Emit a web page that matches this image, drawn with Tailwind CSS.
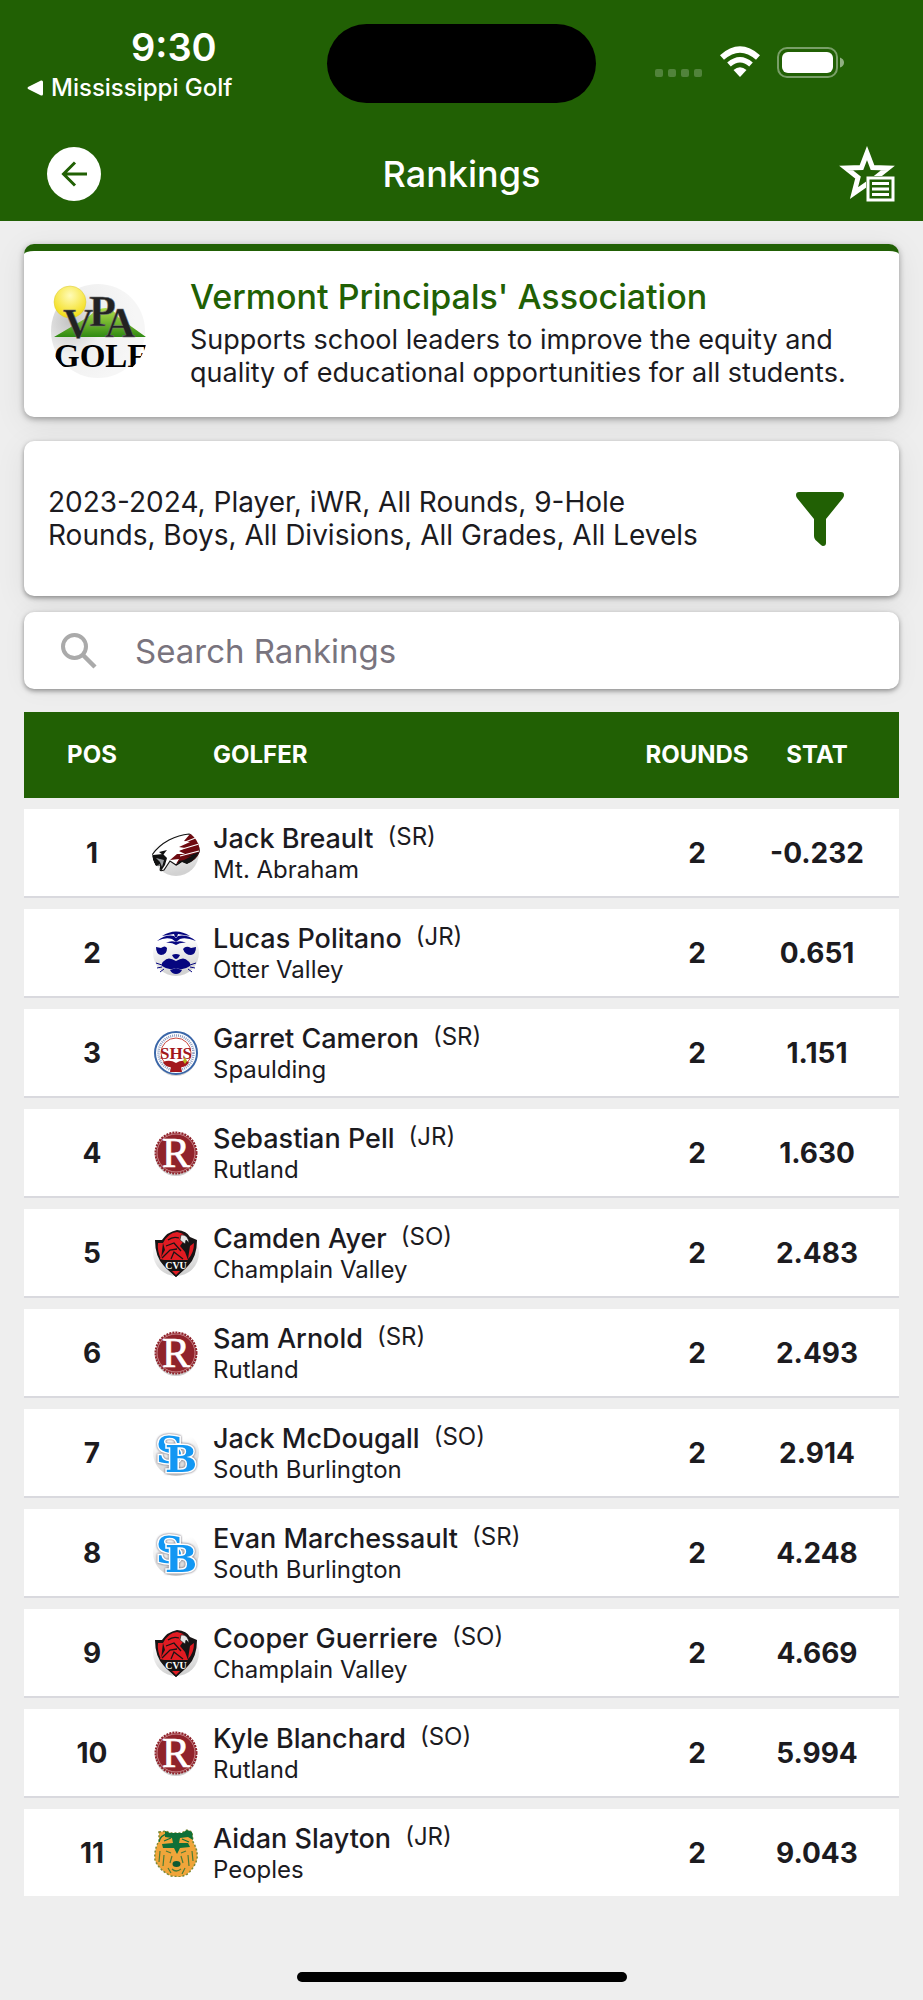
<!DOCTYPE html>
<html lang="en">
  <head>
    <meta charset="UTF-8" />
    <meta name="viewport" content="width=device-width, initial-scale=1.0" />
    <title>Rankings</title>
    <script src="https://cdn.jsdelivr.net/npm/@tailwindcss/browser@4"></script>
  </head>
  <body class="bg-[#eeeeee] font-['Inter',sans-serif] text-[#1c1b1f]">
    <!-- Shared gradients for the logos -->
    <svg class="absolute size-0" aria-hidden="true">
      <defs>
        <linearGradient id="disc" x1="0" y1="0" x2="0.2" y2="1">
          <stop offset="0.3" stop-color="#fff" />
          <stop offset="1" stop-color="#d2d2d2" />
        </linearGradient>
        <linearGradient id="hill" x1="0" y1="0" x2="0" y2="1">
          <stop offset="0" stop-color="#b4e04c" />
          <stop offset="1" stop-color="#2f8a12" />
        </linearGradient>
        <radialGradient id="sun" cx="0.5" cy="0.3" r="0.7">
          <stop offset="0" stop-color="#fffbb8" />
          <stop offset="1" stop-color="#f3dc10" />
        </radialGradient>
        <radialGradient id="shade" cx="0.2" cy="0.4" r="0.7">
          <stop offset="0" stop-color="#c4c4c4" />
          <stop offset="0.5" stop-color="#f0f0f0" />
          <stop offset="1" stop-color="#f6f6f6" />
        </radialGradient>
        <clipPath id="round"><circle cx="24" cy="24" r="24" /></clipPath>
        <clipPath id="roundLarge"><circle cx="50" cy="48" r="50" /></clipPath>
      </defs>
    </svg>

    <!-- School logos, copied into the ranking rows -->
    <template id="mt-abraham">
      <svg class="size-12" viewBox="0 0 48 48" aria-hidden="true">
        <circle cx="24" cy="24" r="23" fill="url(#disc)" />
        <g clip-path="url(#round)">
          <path d="M0 26 Q6 17 17 11 Q27 6 37 5 L44 6 Q49 16 47 23 Q44 31 35 34 L30 32 L24 36 L18 32 L12 41 L8 42 L9 36 L4 36 L2 31 Z" fill="#fff" stroke="#141414" stroke-width="1.2" />
          <path d="M38 5 L44 6 Q49 15 47 24 Q43 32 34 34 L30 32 L24 35 L27 30 L18 31 L25 25 L33 25 L27 22 L33 19 L27 18 L38 13 L32 12 Z" fill="#6d0a10" />
          <path d="M46 8 L28 15 M47 15 L27 21 M47 22 L28 27" stroke="#fff" stroke-width="1.2" />
          <path d="M47 23 Q43 31 35 35 L30 33 L24 37 L27 32 L32 31 L40 27 L34 28 Z M1 26 L11 25 L15 29 L13 36 L9 42 L8 35 L4 37 L1 31 Z" fill="#111" />
          <path d="M4 29 L12 31 L10 38 L8 33 Z" fill="#9a9da1" />
          <path d="M7 23 L15 21 L11 26 Z" fill="#111" />
        </g>
      </svg>
    </template>

    <template id="otter-valley">
      <svg class="size-12" viewBox="0 0 48 48" aria-hidden="true">
        <circle cx="24" cy="24" r="23" fill="url(#disc)" />
        <g fill="#06067f">
          <path d="M10 7 Q24 -2 38 7 L26 5 L25 8 H23 L22 5 Z" />
          <path d="M5 12 Q14 5 22 7 L24 9 L26 7 Q35 5 44 12 Q34 8 28 10 L24 13 L20 10 Q13 8 5 12 Z" />
          <path d="M14 14 Q19 11 24 13 Q29 11 34 14 Q29 13 24 16 Q19 13 14 14 Z" />
          <path d="M4 18 L9 19 Q13 16 15 19 Q15 26 9 26 Q4 25 4 18 Z M44 18 L39 19 Q34 16 31 20 Q33 26 39 26 Q44 25 44 18 Z" />
          <path d="M20 26 Q24 24 28 26 Q26 30 24 30 Q22 30 20 26 Z" />
          <path d="M24 32 Q32 27 36 32 Q39 34 38 37 Q31 42 24 39 Q17 42 10 37 Q9 34 12 32 Q16 27 24 32 Z" />
          <path d="M18 41 L24 39 L30 41 Q28 45 24 45 Q20 45 18 41 Z" />
        </g>
        <path d="M10 36 L4 34 M10 38 L5 39 M12 40 L8 43 M38 36 L44 34 M38 38 L43 39 M36 40 L40 43" stroke="#06067f" />
      </svg>
    </template>

    <template id="spaulding">
      <svg class="size-12" viewBox="0 0 48 48" aria-hidden="true">
        <circle cx="24" cy="26" r="21" fill="#d4d4d4" />
        <circle cx="24" cy="24" r="21" fill="#fff" stroke="#3a66a8" stroke-width="2" />
        <circle cx="24" cy="24" r="15" fill="#fff" stroke="#c8453c" />
        <circle cx="24" cy="24" r="17.500" fill="none" stroke="#8d9cc0" stroke-width="2.500" stroke-dasharray="1 1" />
        <text x="24" y="30" text-anchor="middle" font-family="Liberation Serif" font-size="17" font-weight="700" fill="#a3171c">SHS</text>
        <path d="M11 33 Q18 30 24 34 Q30 30 37 33 Q35 38 29 38 L30 43 L18 43 L19 38 Q13 38 11 33 Z" fill="#a3171c" />
        <path d="M31 32 l2 -4 l2 4 l-2 3 z" fill="#b8b81e" />
      </svg>
    </template>

    <template id="rutland">
      <svg class="size-12" viewBox="0 0 48 48" aria-hidden="true">
        <circle cx="24" cy="26" r="21" fill="#cfcfcf" />
        <circle cx="24" cy="24" r="20" fill="#90232b" />
        <circle cx="24" cy="24" r="20" fill="none" stroke="#90232b" stroke-width="3" stroke-dasharray="2 1" />
        <circle cx="24" cy="24" r="19" fill="none" stroke="#dfaeb1" stroke-width="0.7" />
        <text x="24" y="38" text-anchor="middle" font-family="Liberation Serif" font-size="42" font-weight="400" fill="#fff" stroke="#fff" stroke-width="0.7">R</text>
      </svg>
    </template>

    <template id="champlain-valley">
      <svg class="size-12" viewBox="0 0 48 48" aria-hidden="true">
        <circle cx="24" cy="24" r="23" fill="url(#disc)" />
        <path d="M3 11 L10 11 Q15 3 25 1 Q35 2 38 8 L45 11 Q45 28 36 37 L24 48 L12 37 Q3 28 3 11 Z" fill="#171415" />
        <path d="M6 14 L11 14 L9 30 Q5 22 6 14 Z M42 14 L38 17 L36 30 Q42 24 42 14 Z" fill="#e11b22" />
        <path d="M11 14 Q16 4 25 3 Q31 4 33 7 L29 10 L31 13 L28 17 L33 23 L36 31 L12 31 L8 30 L13 21 Z" fill="#e11b22" />
        <path d="M16 11 Q21 7 27 9 M14 17 L22 14 L29 22 M10 29 L18 21 L25 20 M19 30 L22 23 L31 30" fill="none" stroke="#171415" stroke-width="1.3" />
        <path d="M29 6 Q36 5 37 14 L34 11 L33 15 L28 11 Z" fill="#e4e4e4" stroke="#171415" stroke-width="0.6" />
        <path d="M9 31 H39 L34 39 L24 48 L14 39 Z" fill="#171415" />
        <text x="24" y="40" text-anchor="middle" font-family="Liberation Serif" font-size="10" font-weight="700" fill="#fff">CVU</text>
        <path d="M20 42 H28 L24 46 Z" fill="#e11b22" />
      </svg>
    </template>

    <template id="south-burlington">
      <svg class="size-12" viewBox="0 0 48 48" aria-hidden="true">
        <circle cx="24" cy="24" r="23" fill="url(#disc)" />
        <g class="drop-shadow-[0_0_1px_#5d5866]" font-family="DejaVu Serif" font-weight="700" font-size="38" fill="#1297f3" stroke="#fff" stroke-width="3" paint-order="stroke">
          <text x="4" y="34">S</text>
          <text x="13" y="43">B</text>
        </g>
      </svg>
    </template>

    <template id="peoples">
      <svg class="size-12" viewBox="0 0 48 48" aria-hidden="true">
        <circle cx="24" cy="25" r="22" fill="url(#disc)" />
        <path d="M7 3 L14 2 L18 4 L30 4 L35 1 L40 3 L41 13 Q46 21 45 30 Q42 40 34 46 L28 48 L19 47 Q7 41 3 31 Q2 20 7 12 Z" fill="#f0a53a" stroke="#7d8a35" stroke-width="1.5" stroke-dasharray="2 2" />
        <path d="M13 2 L18 4 L30 4 L35 1 L40 3 L41 11 L36 8 L28 9 L27 14 L36 14 L38 18 L28 19 L25 25 L22 19 L11 19 L10 15 L21 14 L20 9 L13 8 Z" fill="#0f7038" />
        <path d="M7 13 Q8 6 16 5 M12 12 L19 9 M30 10 L37 13" fill="none" stroke="#0f7038" stroke-width="1.3" />
        <path d="M14 22 L19 24 M34 22 L29 24 M20 27 L18 34 M29 27 L31 34 M8 22 L7 33 M12 26 L11 37 M40 22 L41 32 M36 26 L37 37 M20 40 Q24 44 29 40 M16 39 L19 44 M33 39 L30 45" fill="none" stroke="#4c7d36" stroke-width="1.2" />
        <ellipse cx="24.500" cy="35" rx="4" ry="3" fill="#0f5a32" />
      </svg>
    </template>

    <div class="flex min-h-screen flex-col">
      <header class="bg-[#216004] text-white">
        <!-- Status bar -->
        <div class="grid grid-cols-[1fr_auto_1fr] items-start pt-6">
          <div class="pl-[27px]">
            <p class="pl-[104px] text-[38px] leading-[46px] font-semibold">9:30</p>
            <a href="#" class="flex items-center gap-2 text-[24px] leading-[36px] font-medium">
              <svg class="h-4 w-4" viewBox="0 0 16 16" fill="currentColor"><path d="M1 7 L14 0.500 Q16 0 16 2 V14 Q16 16 14 15.500 L1 9 Q0 8 1 7 Z" /></svg>
              Mississippi Golf
            </a>
          </div>
          <div class="h-[79px] w-[269px] rounded-full bg-black"></div>
          <div class="flex items-center gap-4 pt-[22px] pl-[59px]">
            <svg class="h-8 w-12" viewBox="0 0 48 32" fill="#fff" fill-opacity="0.22">
              <rect x="0" y="23" width="8" height="8" rx="2" />
              <rect x="13" y="23" width="8" height="8" rx="2" />
              <rect x="26" y="23" width="8" height="8" rx="2" />
              <rect x="39" y="23" width="8" height="8" rx="2" />
            </svg>
            <svg class="h-8 w-[42px]" viewBox="0 0 42 32" fill="none" stroke="#fff">
              <path d="M3 11.500 Q21 -4.500 39 11.500" stroke-width="6" />
              <path d="M10 18.500 Q21 9 32 18.500" stroke-width="5.500" />
              <path d="M14.500 24 Q21 18.500 27.500 24 L21 31 Z" fill="#fff" stroke="none" />
            </svg>
            <svg class="h-8 w-[68px]" viewBox="0 0 68 32">
              <rect x="1" y="2" width="59" height="29" rx="9" fill="none" stroke="#fff" stroke-opacity="0.4" stroke-width="2" />
              <rect x="5" y="6" width="51" height="21" rx="6" fill="#fff" />
              <path d="M63 11.500 Q67 13 67 16.500 Q67 20 63 21.500 Z" fill="#fff" fill-opacity="0.5" />
            </svg>
          </div>
        </div>

        <!-- Navigation bar -->
        <div class="grid grid-cols-[1fr_auto_1fr] items-center pt-[38px] pb-[17px]">
          <button type="button" aria-label="Back" class="ml-[47px] flex size-[54px] items-center justify-center rounded-full bg-white">
            <svg class="size-[26px]" viewBox="0 0 26 26" fill="none" stroke="#216004" stroke-width="3"><path d="M26 13 H3 M14 1.500 L2.500 13 L14 24.500" /></svg>
          </button>
          <h1 class="text-[36px] leading-[60px] font-medium">Rankings</h1>
          <button type="button" aria-label="Favorites list" class="mr-7 size-14 justify-self-end">
            <svg class="size-14" viewBox="0 0 56 56" fill="none" stroke="#fff">
              <path d="M28 7 L33.500 21.500 L49 22 L37 31.500 L41 46 L28 38 L15 47 L19 31.500 L7 22 L22.500 21.500 Z" stroke-width="5" stroke-miterlimit="8" />
              <path d="M27 30 H56 V56 H27 Z" fill="#216004" stroke="none" />
              <path d="M29 32 H54 V54 H29 Z" stroke-width="3" />
              <path d="M33 37.500 H50 M33 43 H50 M33 48.500 H50" stroke-width="3" />
            </svg>
          </button>
        </div>
      </header>

      <main class="flex-1 px-6 pt-[23px]">
        <section class="flex rounded-[10px] border-t-[7px] border-[#216004] bg-white pt-6 pr-6 pb-7 pl-6 shadow-[0_2px_6px_rgba(0,0,0,0.35),0_6px_32px_rgba(0,0,0,0.08)]">
          <svg class="mt-2 size-[100px] shrink-0" viewBox="0 0 100 100" role="img" aria-label="VPA Golf">
            <g clip-path="url(#roundLarge)">
              <circle cx="50" cy="48" r="47" fill="url(#shade)" />
              <path d="M6 54 L40 34 Q60 16 70 34 L98 54 Z" fill="url(#hill)" />
              <text x="6" y="84" font-family="Liberation Serif" font-size="33" font-weight="700" fill="#000">GOLF</text>
            </g>
            <circle cx="22" cy="19" r="16" fill="url(#sun)" stroke="#d9c840" stroke-width="0.5" />
            <g font-family="Liberation Serif" font-weight="700" fill="#222" stroke="#777" stroke-width="0.5">
              <text x="15" y="55" font-size="42">V</text>
              <text x="57" y="54" font-size="42">A</text>
              <text x="41" y="43" font-size="44">P</text>
            </g>
          </svg>
          <div class="pl-[42px]">
            <h2 class="mb-1 text-[34px] leading-[44px] font-medium text-[#216004]">Vermont Principals' Association</h2>
            <p class="text-[27px] leading-[33px]">Supports school leaders to improve the equity and<br />quality of educational opportunities for all students.</p>
          </div>
        </section>

        <section class="mt-6 flex min-h-[155px] items-center justify-between rounded-[10px] bg-white pl-6 shadow-[0_2px_5px_rgba(0,0,0,0.4),0_6px_32px_rgba(0,0,0,0.07)]">
          <p class="text-[28px] leading-[33px]">2023-2024, Player, iWR, All Rounds, 9-Hole<br />Rounds, Boys, All Divisions, All Grades, All Levels</p>
          <button type="button" aria-label="Filter rankings" class="flex w-[158px] shrink-0 justify-center">
            <svg class="h-[54px] w-12" viewBox="0 0 48 54" fill="#216004"><path d="M3 0 H45 Q48 0 48 3 Q48 4.500 47 6 L30 27 V51 Q30 54 27 54 Q26 54 25 53 L19.500 48 Q18 46.500 18 44 V27 L1 6 Q0 4.500 0 3 Q0 0 3 0 Z" /></svg>
          </button>
        </section>

        <div class="mt-4 flex h-[77px] items-center rounded-[10px] bg-white pl-[37px] shadow-[0_2px_5px_rgba(0,0,0,0.4),0_0_24px_rgba(0,0,0,0.05)]">
          <label for="search" class="pr-[38px]">
            <span class="sr-only">Search Rankings</span>
            <svg class="size-9" viewBox="0 0 36 36" fill="none" stroke="#aaaaaa"><circle cx="13.500" cy="13.500" r="11.500" stroke-width="4" /><path d="M22 22 L34 34" stroke-width="4.500" /></svg>
          </label>
          <input id="search" type="search" placeholder="Search Rankings" class="h-full min-w-0 flex-1 bg-transparent text-[33px] outline-none placeholder:text-[#79747e]" />
        </div>

        <table class="mt-[23px] w-full table-fixed border-separate border-spacing-0">
          <thead>
            <tr class="h-[86px] bg-[#216004] text-[24px] font-bold text-white">
              <th scope="col" class="w-32 pl-2">POS</th>
              <td class="w-[61px]"></td>
              <th scope="col" class="text-left">GOLFER</th>
              <th scope="col" class="w-[116px]">ROUNDS</th>
              <th scope="col" class="w-36 pr-5">STAT</th>
            </tr>
          </thead>
          <tbody id="rankings"></tbody>
        </table>
      </main>

      <footer class="flex justify-center pb-[18px]">
        <div class="h-[10px] w-[330px] rounded-full bg-black"></div>
      </footer>
    </div>

    <script>
      const golfers = [
        ["Jack Breault", "SR", "Mt. Abraham", "mt-abraham", 2, "-0.232"],
        ["Lucas Politano", "JR", "Otter Valley", "otter-valley", 2, "0.651"],
        ["Garret Cameron", "SR", "Spaulding", "spaulding", 2, "1.151"],
        ["Sebastian Pell", "JR", "Rutland", "rutland", 2, "1.630"],
        ["Camden Ayer", "SO", "Champlain Valley", "champlain-valley", 2, "2.483"],
        ["Sam Arnold", "SR", "Rutland", "rutland", 2, "2.493"],
        ["Jack McDougall", "SO", "South Burlington", "south-burlington", 2, "2.914"],
        ["Evan Marchessault", "SR", "South Burlington", "south-burlington", 2, "4.248"],
        ["Cooper Guerriere", "SO", "Champlain Valley", "champlain-valley", 2, "4.669"],
        ["Kyle Blanchard", "SO", "Rutland", "rutland", 2, "5.994"],
        ["Aidan Slayton", "JR", "Peoples", "peoples", 2, "9.043"],
      ];

      // The top border of each cell is the gap between two rows
      document.getElementById("rankings").innerHTML = golfers
        .map(
          ([name, grade, school, logo, rounds, stat], index) => `
          <tr class="h-[100px] text-center text-[28px] font-bold *:border-t-[11px] *:border-b-2 *:border-t-[#eeeeee] *:border-b-[#d9d9de] *:bg-white last:*:border-b-[#eeeeee]">
            <td class="pl-2">${index + 1}</td>
            <td>${document.getElementById(logo).innerHTML}</td>
            <td class="text-left font-normal">
              <div class="flex items-start gap-[14px]">
                <a href="#" class="text-[27px] leading-[34px] font-medium">${name}</a>
                <span class="text-[24px] leading-[30px]">(${grade})</span>
              </div>
              <p class="text-[24px] leading-[28px]">${school}</p>
            </td>
            <td>${rounds}</td>
            <td class="pr-5">${stat}</td>
          </tr>`
        )
        .join("");
    </script>
  </body>
</html>
